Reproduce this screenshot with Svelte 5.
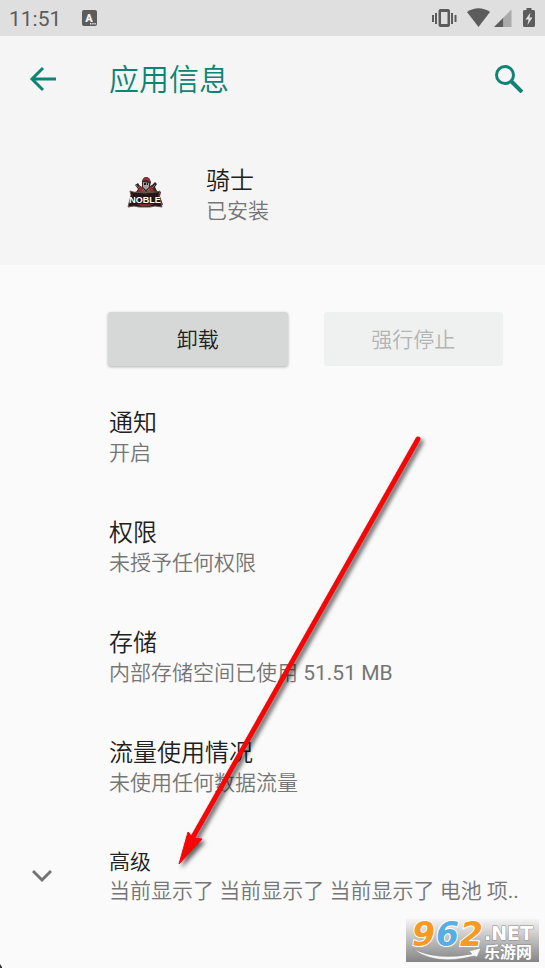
<!-- App info screen: status bar, app header, actions and settings list -->
<script>
  const app = { name: '骑士', status: '已安装' };

  const settings = [
    { title: '通知', summary: '开启' },
    { title: '权限', summary: '未授予任何权限' },
    { title: '存储', summary: '内部存储空间已使用 51.51 MB' },
    { title: '流量使用情况', summary: '未使用任何数据流量' },
  ];

  const advanced = {
    title: '高级',
    summary: '当前显示了 当前显示了 当前显示了 电池 项..',
  };
</script>

<div class="screen">
  <div class="status-bar">
    <span class="clock">11:51</span>
    <svg class="notice" width="16" height="16" viewBox="0 0 16 16">
      <rect width="15" height="16" rx="2" fill="#5c5c5c" />
      <text x="7" y="12" text-anchor="middle" class="notice-letter">A</text>
      <path d="M8 13h1.4v1.4H8zM10.2 13h1.4v1.4h-1.4zM12.4 13h1.4v1.4h-1.4z" fill="#dfdfdf" />
    </svg>
    <svg class="indicators" width="104" height="22" viewBox="0 0 104 22">
      <g fill="#5c5c5c">
        <path d="M0 8h2v7H0zM3 6h2v11H3zM19 6h2v11h-2zM22.500 8h2v7h-2z" />
        <path fill-rule="evenodd" d="M8.500 2h7.500q2 0 2 2v14q0 2-2 2H8.500q-2 0-2-2V4q0-2 2-2zM9 5v12h6.500V5z" />
        <path d="M35 5Q46.500-2.500 58 5L46.500 20z" />
        <path d="M62 20 71.500 10.500V20z" />
        <path fill-rule="evenodd" d="M94.500 1h5v2h2q1.500 0 1.500 1.500v14q0 1.500-1.500 1.500h-9q-1.500 0-1.500-1.500v-14Q91 3 92.500 3h2zM98.500 5.500l-5 7h3l-1 5.500 5-7.500h-3z" />
      </g>
      <path d="M71.500 10.500 79.500 2.500V20h-8z" fill="#aaa" />
    </svg>
  </div>

  <header>
    <div class="toolbar">
      <button class="icon-btn" aria-label="返回">
        <svg width="28" height="28" viewBox="0 0 28 28" fill="none" stroke="#0f8374" stroke-width="3">
          <path d="M27 14H4M14 3 3 14l11 11" />
        </svg>
      </button>
      <h1>应用信息</h1>
      <button class="icon-btn" aria-label="搜索">
        <svg width="28" height="28" viewBox="0 0 28 28" fill="none" stroke="#0f8374">
          <circle cx="10" cy="10" r="8.500" stroke-width="3" />
          <path d="m16 16 11 11" stroke-width="4" />
        </svg>
      </button>
    </div>

    <div class="app-row">
      <svg class="app-logo" width="36" height="34" viewBox="0 0 36 34">
        <path d="M8 9l3-2 2 3 2 1V5l3-4 4 1 2 4-1 4 2-1 3-3 2 2-2 3 2 4 4 1-1 4 3 9-7-1-5 2H13l-5-1-6 1 3-10-1-3 5-1 2-3z" fill="#352728" />
        <path d="M15 5q1-4 4-4 4 0 4 5l-4-2z" fill="#8d3033" />
        <path d="M16 6l6 1v4l-3 3-3-3z" fill="#aaa09d" />
        <path d="M17 7h2v2h-2zM20 7h1v2h-1z" fill="#201819" />
        <path d="M12 10l3 1 4 6-8-1zM24 10l-2 2-2 5 8-1z" fill="#94312f" />
        <path d="M16 13l3 4 3-4v4h-6zM9 9l3 3M28 9l-3 3" fill="#33292c" stroke="#867067" />
        <path d="M3 15l3 1 12 1 12-1 3-1-1 4 3 12-7-1-5 1H12l-5-1-6 1 3-12z" fill="#251517" stroke="#65534d" />
        <path d="M10 28h17l-5 2H14z" fill="#842b30" />
        <text x="18" y="27" text-anchor="middle" class="logo-text">NOBLE</text>
      </svg>
      <div>
        <h2>{app.name}</h2>
        <p>{app.status}</p>
      </div>
    </div>
  </header>

  <main>
    <div class="actions">
      <button class="action">卸载</button>
      <button class="action" disabled>强行停止</button>
    </div>

    <div class="settings">
      {#each settings as item}
        <button class="setting">
          <span class="title">{item.title}</span>
          <span class="summary">{item.summary}</span>
        </button>
      {/each}
    </div>

    <button class="setting advanced">
      <svg width="20" height="14" viewBox="0 0 20 14" fill="none" stroke="#737373" stroke-width="3">
        <path d="m1 2 9 9 9-9" />
      </svg>
      <span class="lines">
        <span class="title">{advanced.title}</span>
        <span class="summary">{advanced.summary}</span>
      </span>
    </button>
  </main>

  <!-- Red pointer to the advanced entry -->
  <svg class="pointer" width="440" height="968" viewBox="0 0 440 968">
    <g class="pointer-arrow" fill="#f60606">
      <path d="M418 439 193 837" stroke="#f60606" stroke-width="5" stroke-linecap="round" />
      <path d="M179 864 188 832l5 6 9 1z" stroke="#f60606" />
    </g>
    <path d="M0 964l2 3v1H0z" fill="#333" />
  </svg>

  <svg class="watermark" width="133" height="54" viewBox="0 0 133 54">
    <defs>
      <linearGradient id="plate" x1="0" y1="0" x2="0" y2="1">
        <stop offset="0" stop-color="#f4f4f4" />
        <stop offset="1" stop-color="#858585" />
      </linearGradient>
    </defs>
    <rect y="11" width="133" height="43" fill="url(#plate)" />
    <path d="M7 41q25 12 59 5l-3-3 12-3-4 9-3-1Q29 58 7 41z" fill="#f7f7f7" stroke="#8a8a8a" stroke-width=".5" />
    <text y="38" class="mark-number"><tspan x="6" fill="#f59a22">9</tspan><tspan x="30" fill="#58aee2">6</tspan><tspan x="54" fill="#f59a22">2</tspan></text>
    <text x="78" y="32" class="mark-net">.NET</text>
    <text x="78" y="50" class="mark-name">乐游网</text>
  </svg>
</div>

<style>
  :global(body) { margin: 0; background: #fafafa; }

  .screen {
    position: relative;
    min-height: 100vh;
    overflow: hidden;
    color: #202020;
    font-family: Roboto, "Noto Sans CJK SC DemiLight", "Noto Sans CJK SC", sans-serif;
    font-size: 21px;
  }

  h1, h2, p { margin: 0; font-weight: 400; }
  svg { display: block; flex-shrink: 0; }
  button { font: inherit; color: inherit; border: none; cursor: pointer; }

  /* Status bar */
  .status-bar {
    display: flex;
    align-items: center;
    height: 36px;
    padding: 0 9px;
    background: #dfdfdf;
  }
  .clock { font-size: 21px; line-height: 24px; padding-top: 2px; color: #5c5c5c; }
  .notice { margin-left: 21px; }
  .notice-letter { font: 900 11px Roboto, sans-serif; fill: #f2f2f2; }
  .indicators { margin-left: auto; }

  /* Header */
  header { background: #f5f5f5; padding-bottom: 40px; }
  .toolbar {
    display: flex;
    align-items: center;
    height: 86px;
    padding: 0 22px 0 29px;
  }
  .icon-btn { padding: 0; background: none; }
  h1 { flex: 1; margin-left: 52px; padding-top: 2px; font-size: 30px; line-height: 40px; color: #0f8374; }

  .app-row { display: flex; align-items: center; gap: 43px; padding: 43px 24px 0 127px; }
  .app-logo { margin-bottom: 4px; }
  h2 { font-size: 24px; line-height: 32px; }
  p { line-height: 28px; color: #757575; }
  .logo-text {
    font: 700 9px "Liberation Sans", sans-serif;
    fill: #fff;
  }

  /* Buttons */
  .actions {
    display: grid;
    grid-template-columns: 1fr 1fr;
    gap: 36px;
    padding: 47px 42px 0 108px;
  }
  .action {
    height: 54px;
    padding: 0 0 2px;
    border-radius: 3px;
    background: #d6d8d7;
    box-shadow: 0 1px 3px rgba(0, 0, 0, 0.3);
  }
  .action:disabled { background: #eff1f0; color: #b3b4b4; box-shadow: none; cursor: default; }

  /* Settings list */
  .settings { display: flex; flex-direction: column; gap: 50px; padding: 41px 24px 50px 109px; }
  .setting { padding: 0; background: none; text-align: left; }
  .title, .summary { display: block; white-space: nowrap; }
  .title { font-size: 24px; line-height: 32px; }
  .summary { line-height: 28px; color: #757575; overflow: hidden; }

  .advanced {
    display: flex;
    align-items: center;
    gap: 57px;
    width: 100%;
    padding: 0 20px 62px 32px;
  }
  .lines { min-width: 0; }
  .advanced .title { font-size: 21px; line-height: 30px; }

  /* Overlays */
  .pointer { position: absolute; top: 0; left: 0; pointer-events: none; }
  .pointer-arrow { filter: drop-shadow(3px 3px 2px rgba(0, 0, 0, 0.6)); }
  .watermark { position: absolute; right: 6px; bottom: 6px; }
  .mark-number {
    font: italic 700 33px "DejaVu Sans", sans-serif;
    stroke: #fff;
    stroke-width: 2px;
    paint-order: stroke;
  }
  .mark-net, .mark-name { fill: #fff; stroke: #8a8a8a; stroke-width: 1px; paint-order: stroke; }
  .mark-net { font: 700 19px "DejaVu Sans", sans-serif; }
  .mark-name { font: 700 16px "Noto Sans CJK SC", sans-serif; }
</style>
